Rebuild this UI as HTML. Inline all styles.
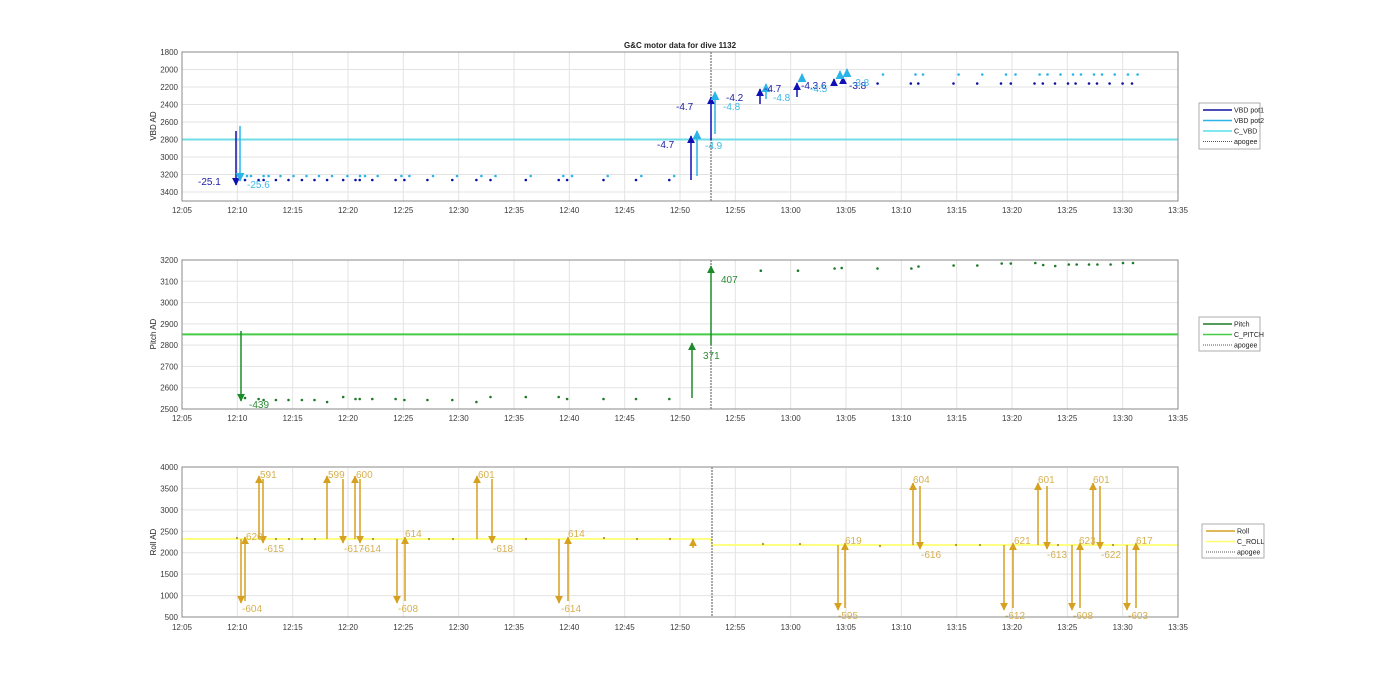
<!DOCTYPE html>
<html><head><meta charset="utf-8"><style>
html,body{margin:0;padding:0;background:#fff;}
svg{display:block;font-family:"Liberation Sans",sans-serif;}
.tk{font-size:8px;fill:#3a3a3a;}
.g{stroke:#e3e3e3;stroke-width:1;}
.ax{fill:none;stroke:#8a8a8a;stroke-width:1;}
.lg{font-size:7px;fill:#222;}
</style></head><body>
<svg width="1400" height="693" viewBox="0 0 1400 693" xmlns="http://www.w3.org/2000/svg">
<defs>
<marker id="mD" viewBox="0 0 10 10" refX="9" refY="5" markerWidth="8" markerHeight="8" markerUnits="userSpaceOnUse" orient="auto"><path d="M0,0L10,5L0,10z" fill="#1010b4"/></marker>
<marker id="mL" viewBox="0 0 10 10" refX="9" refY="5" markerWidth="9" markerHeight="9" markerUnits="userSpaceOnUse" orient="auto"><path d="M0,0L10,5L0,10z" fill="#2ab4e8"/></marker>
<marker id="mG" viewBox="0 0 10 10" refX="9" refY="5" markerWidth="8" markerHeight="8" markerUnits="userSpaceOnUse" orient="auto"><path d="M0,0L10,5L0,10z" fill="#1e8a2a"/></marker>
<marker id="mY" viewBox="0 0 10 10" refX="9" refY="5" markerWidth="8" markerHeight="8" markerUnits="userSpaceOnUse" orient="auto"><path d="M0,0L10,5L0,10z" fill="#d6a020"/></marker>
<g id="vg">
<line class="g" x1="237.3" y1="0" x2="237.3" y2="149"/><line class="g" x1="292.7" y1="0" x2="292.7" y2="149"/><line class="g" x1="348" y1="0" x2="348" y2="149"/><line class="g" x1="403.3" y1="0" x2="403.3" y2="149"/><line class="g" x1="458.7" y1="0" x2="458.7" y2="149"/><line class="g" x1="514" y1="0" x2="514" y2="149"/><line class="g" x1="569.3" y1="0" x2="569.3" y2="149"/><line class="g" x1="624.7" y1="0" x2="624.7" y2="149"/><line class="g" x1="680" y1="0" x2="680" y2="149"/><line class="g" x1="735.3" y1="0" x2="735.3" y2="149"/><line class="g" x1="790.7" y1="0" x2="790.7" y2="149"/><line class="g" x1="846" y1="0" x2="846" y2="149"/><line class="g" x1="901.3" y1="0" x2="901.3" y2="149"/><line class="g" x1="956.7" y1="0" x2="956.7" y2="149"/><line class="g" x1="1012" y1="0" x2="1012" y2="149"/><line class="g" x1="1067.3" y1="0" x2="1067.3" y2="149"/><line class="g" x1="1122.7" y1="0" x2="1122.7" y2="149"/>
</g>
<g id="xt" class="tk" text-anchor="middle">
<text x="182" y="0">12:05</text><text x="237.3" y="0">12:10</text><text x="292.7" y="0">12:15</text><text x="348" y="0">12:20</text><text x="403.3" y="0">12:25</text><text x="458.7" y="0">12:30</text><text x="514" y="0">12:35</text><text x="569.3" y="0">12:40</text><text x="624.7" y="0">12:45</text><text x="680" y="0">12:50</text><text x="735.3" y="0">12:55</text><text x="790.7" y="0">13:00</text><text x="846" y="0">13:05</text><text x="901.3" y="0">13:10</text><text x="956.7" y="0">13:15</text><text x="1012" y="0">13:20</text><text x="1067.3" y="0">13:25</text><text x="1122.7" y="0">13:30</text><text x="1178" y="0">13:35</text>
</g>
</defs>

<text x="680" y="48" text-anchor="middle" font-size="8" font-weight="bold" fill="#222">G&amp;C motor data for dive 1132</text>

<!-- ===== TOP ===== -->
<use href="#vg" transform="translate(0,52)"/>
<g class="g"><line x1="182" y1="69.5" x2="1178" y2="69.5"/><line x1="182" y1="87" x2="1178" y2="87"/><line x1="182" y1="104.5" x2="1178" y2="104.5"/><line x1="182" y1="122" x2="1178" y2="122"/><line x1="182" y1="157" x2="1178" y2="157"/><line x1="182" y1="174.5" x2="1178" y2="174.5"/><line x1="182" y1="192" x2="1178" y2="192"/></g>
<line x1="182" y1="139.5" x2="1178" y2="139.5" stroke="#70dde6" stroke-width="2"/>
<line x1="711" y1="52" x2="711" y2="201" stroke="#555" stroke-width="1" stroke-dasharray="2,1"/>
<rect class="ax" x="182" y="52" width="996" height="149"/>
<g class="tk" text-anchor="end"><text x="178" y="55">1800</text><text x="178" y="72.5">2000</text><text x="178" y="90">2200</text><text x="178" y="107.5">2400</text><text x="178" y="125">2600</text><text x="178" y="142.5">2800</text><text x="178" y="160">3000</text><text x="178" y="177.5">3200</text><text x="178" y="195">3400</text></g>
<use href="#xt" transform="translate(0,213)"/>
<text transform="translate(156,126) rotate(-90)" text-anchor="middle" font-size="8" fill="#222">VBD AD</text>
<g fill="#1010a0"><circle cx="245" cy="180" r="1.3"/><circle cx="258.6" cy="180" r="1.3"/><circle cx="263.6" cy="180" r="1.3"/><circle cx="275.9" cy="180" r="1.3"/><circle cx="288.5" cy="180" r="1.3"/><circle cx="301.9" cy="180" r="1.3"/><circle cx="314.5" cy="180" r="1.3"/><circle cx="327.1" cy="180" r="1.3"/><circle cx="343.2" cy="180" r="1.3"/><circle cx="355.5" cy="180" r="1.3"/><circle cx="359.7" cy="180" r="1.3"/><circle cx="372.3" cy="180" r="1.3"/><circle cx="395.6" cy="180" r="1.3"/><circle cx="404.4" cy="180" r="1.3"/><circle cx="427.4" cy="180" r="1.3"/><circle cx="452.3" cy="180" r="1.3"/><circle cx="476.4" cy="180" r="1.3"/><circle cx="490.5" cy="180" r="1.3"/><circle cx="525.8" cy="180" r="1.3"/><circle cx="558.7" cy="180" r="1.3"/><circle cx="567.1" cy="180" r="1.3"/><circle cx="603.5" cy="180" r="1.3"/><circle cx="636" cy="180" r="1.3"/><circle cx="669.3" cy="180" r="1.3"/>
<circle cx="877.6" cy="83.5" r="1.3"/><circle cx="910.8" cy="83.5" r="1.3"/><circle cx="918.3" cy="83.5" r="1.3"/><circle cx="953.5" cy="83.5" r="1.3"/><circle cx="977.2" cy="83.5" r="1.3"/><circle cx="1001" cy="83.5" r="1.3"/><circle cx="1010.8" cy="83.5" r="1.3"/><circle cx="1034.5" cy="83.5" r="1.3"/><circle cx="1042.8" cy="83.5" r="1.3"/><circle cx="1055" cy="83.5" r="1.3"/><circle cx="1068" cy="83.5" r="1.3"/><circle cx="1075.6" cy="83.5" r="1.3"/><circle cx="1089" cy="83.5" r="1.3"/><circle cx="1097" cy="83.5" r="1.3"/><circle cx="1109.6" cy="83.5" r="1.3"/><circle cx="1122.6" cy="83.5" r="1.3"/><circle cx="1132" cy="83.5" r="1.3"/></g>
<g fill="#2ab4e8"><circle cx="247" cy="176" r="1.3"/><circle cx="251" cy="176" r="1.3"/><circle cx="263.6" cy="176" r="1.3"/><circle cx="268.6" cy="176" r="1.3"/><circle cx="280.5" cy="176" r="1.3"/><circle cx="293.5" cy="176" r="1.3"/><circle cx="306.5" cy="176" r="1.3"/><circle cx="319" cy="176" r="1.3"/><circle cx="332" cy="176" r="1.3"/><circle cx="347.4" cy="176" r="1.3"/><circle cx="360" cy="176" r="1.3"/><circle cx="365" cy="176" r="1.3"/><circle cx="377.7" cy="176" r="1.3"/><circle cx="401.4" cy="176" r="1.3"/><circle cx="409.4" cy="176" r="1.3"/><circle cx="433" cy="176" r="1.3"/><circle cx="457" cy="176" r="1.3"/><circle cx="481.4" cy="176" r="1.3"/><circle cx="495.5" cy="176" r="1.3"/><circle cx="530.7" cy="176" r="1.3"/><circle cx="563.3" cy="176" r="1.3"/><circle cx="572" cy="176" r="1.3"/><circle cx="607.7" cy="176" r="1.3"/><circle cx="641.3" cy="176" r="1.3"/><circle cx="674.2" cy="176" r="1.3"/>
<circle cx="883" cy="74.5" r="1.3"/><circle cx="915.5" cy="74.5" r="1.3"/><circle cx="923" cy="74.5" r="1.3"/><circle cx="958.6" cy="74.5" r="1.3"/><circle cx="982.3" cy="74.5" r="1.3"/><circle cx="1006" cy="74.5" r="1.3"/><circle cx="1015.5" cy="74.5" r="1.3"/><circle cx="1039.6" cy="74.5" r="1.3"/><circle cx="1047.5" cy="74.5" r="1.3"/><circle cx="1060.5" cy="74.5" r="1.3"/><circle cx="1073" cy="74.5" r="1.3"/><circle cx="1081" cy="74.5" r="1.3"/><circle cx="1094" cy="74.5" r="1.3"/><circle cx="1102" cy="74.5" r="1.3"/><circle cx="1114.7" cy="74.5" r="1.3"/><circle cx="1128" cy="74.5" r="1.3"/><circle cx="1137.6" cy="74.5" r="1.3"/></g>
<g stroke="#1010b4" stroke-width="1.5" marker-end="url(#mD)">
<line x1="236" y1="131" x2="236" y2="185"/><line x1="691" y1="180" x2="691" y2="136"/><line x1="711" y1="140" x2="711" y2="97"/><line x1="760" y1="104" x2="760" y2="89"/><line x1="797" y1="97" x2="797" y2="83"/><line x1="834" y1="86" x2="834" y2="79"/><line x1="843" y1="84" x2="843" y2="77"/></g>
<g stroke="#2ab4e8" stroke-width="1.5" marker-end="url(#mL)">
<line x1="240" y1="126" x2="240" y2="181"/><line x1="697" y1="176" x2="697" y2="131"/><line x1="715" y1="134" x2="715" y2="92"/><line x1="766" y1="99" x2="766" y2="84"/><line x1="802" y1="82" x2="802" y2="74"/><line x1="840" y1="79" x2="840" y2="71"/><line x1="847" y1="77" x2="847" y2="69"/></g>
<g font-size="10" fill="#1e1ea8"><text x="198" y="185">-25.1</text><text x="657" y="148">-4.7</text><text x="676" y="110">-4.7</text><text x="726" y="101">-4.2</text><text x="764" y="92">-4.7</text><text x="801" y="89">-4.3.6</text><text x="849" y="89">-3.8</text></g>
<g font-size="10" fill="#3cb8e8"><text x="247" y="188">-25.6</text><text x="705" y="149">-4.9</text><text x="723" y="110">-4.8</text><text x="773" y="101">-4.8</text><text x="810" y="92">-4.5</text><text x="852" y="86">-3.8</text></g>
<rect x="1199" y="103" width="61" height="46" fill="#fff" stroke="#999" stroke-width="0.8"/>
<line x1="1203" y1="110" x2="1232" y2="110" stroke="#1010a0" stroke-width="1.5"/><text class="lg" x="1234" y="112.5">VBD pot1</text>
<line x1="1203" y1="120.5" x2="1232" y2="120.5" stroke="#2ab4e8" stroke-width="1.5"/><text class="lg" x="1234" y="123">VBD pot2</text>
<line x1="1203" y1="131" x2="1232" y2="131" stroke="#55e0ea" stroke-width="1.5"/><text class="lg" x="1234" y="133.5">C_VBD</text>
<line x1="1203" y1="141.5" x2="1232" y2="141.5" stroke="#555" stroke-dasharray="1,1"/><text class="lg" x="1234" y="144">apogee</text>

<!-- ===== MIDDLE ===== -->
<use href="#vg" transform="translate(0,260)"/>
<g class="g"><line x1="182" y1="281.3" x2="1178" y2="281.3"/><line x1="182" y1="302.6" x2="1178" y2="302.6"/><line x1="182" y1="323.9" x2="1178" y2="323.9"/><line x1="182" y1="345.1" x2="1178" y2="345.1"/><line x1="182" y1="366.4" x2="1178" y2="366.4"/><line x1="182" y1="387.7" x2="1178" y2="387.7"/></g>
<line x1="182" y1="334.4" x2="1178" y2="334.4" stroke="#44cc44" stroke-width="2"/>
<line x1="711" y1="260" x2="711" y2="409" stroke="#555" stroke-width="1" stroke-dasharray="2,1"/>
<rect class="ax" x="182" y="260" width="996" height="149"/>
<g class="tk" text-anchor="end"><text x="178" y="263">3200</text><text x="178" y="284.3">3100</text><text x="178" y="305.6">3000</text><text x="178" y="326.9">2900</text><text x="178" y="348.1">2800</text><text x="178" y="369.4">2700</text><text x="178" y="390.7">2600</text><text x="178" y="412">2500</text></g>
<use href="#xt" transform="translate(0,421)"/>
<text transform="translate(156,334) rotate(-90)" text-anchor="middle" font-size="8" fill="#222">Pitch AD</text>
<g fill="#1e7a28"><circle cx="245" cy="398" r="1.3"/><circle cx="258.6" cy="399" r="1.3"/><circle cx="263.6" cy="400" r="1.3"/><circle cx="275.9" cy="400" r="1.3"/><circle cx="288.5" cy="400" r="1.3"/><circle cx="301.9" cy="400" r="1.3"/><circle cx="314.5" cy="400" r="1.3"/><circle cx="327.1" cy="402" r="1.3"/><circle cx="343.2" cy="397" r="1.3"/><circle cx="355.5" cy="399" r="1.3"/><circle cx="359.7" cy="399" r="1.3"/><circle cx="372.3" cy="399" r="1.3"/><circle cx="395.6" cy="399" r="1.3"/><circle cx="404.4" cy="400" r="1.3"/><circle cx="427.4" cy="400" r="1.3"/><circle cx="452.3" cy="400" r="1.3"/><circle cx="476.4" cy="402" r="1.3"/><circle cx="490.5" cy="397" r="1.3"/><circle cx="525.8" cy="397" r="1.3"/><circle cx="558.7" cy="397" r="1.3"/><circle cx="567.1" cy="399" r="1.3"/><circle cx="603.5" cy="399" r="1.3"/><circle cx="636" cy="399" r="1.3"/><circle cx="669.3" cy="399" r="1.3"/>
<circle cx="760.8" cy="270.7" r="1.3"/><circle cx="798" cy="270.7" r="1.3"/><circle cx="834.6" cy="268.5" r="1.3"/><circle cx="841.7" cy="268" r="1.3"/><circle cx="877.5" cy="268.5" r="1.3"/><circle cx="911.4" cy="268.5" r="1.3"/><circle cx="918.5" cy="266.5" r="1.3"/><circle cx="953.6" cy="265.5" r="1.3"/><circle cx="977.3" cy="265.5" r="1.3"/><circle cx="1001.7" cy="263.5" r="1.3"/><circle cx="1010.8" cy="263.5" r="1.3"/><circle cx="1035.3" cy="263" r="1.3"/><circle cx="1043.2" cy="265" r="1.3"/><circle cx="1055.2" cy="266" r="1.3"/><circle cx="1068.8" cy="264.5" r="1.3"/><circle cx="1076.7" cy="264.5" r="1.3"/><circle cx="1089" cy="264.5" r="1.3"/><circle cx="1097.4" cy="264.5" r="1.3"/><circle cx="1110.6" cy="264.5" r="1.3"/><circle cx="1123" cy="263" r="1.3"/><circle cx="1133" cy="263" r="1.3"/></g>
<g stroke="#1e8a2a" stroke-width="1.5" marker-end="url(#mG)">
<line x1="241" y1="331" x2="241" y2="401"/><line x1="692" y1="398" x2="692" y2="343"/><line x1="711" y1="345" x2="711" y2="266"/></g>
<g font-size="10" fill="#2e8a36"><text x="249" y="408">-439</text><text x="703" y="359">371</text><text x="721" y="283">407</text></g>
<rect x="1199" y="317" width="61" height="34" fill="#fff" stroke="#999" stroke-width="0.8"/>
<line x1="1203" y1="324" x2="1232" y2="324" stroke="#1e7a28" stroke-width="1.5"/><text class="lg" x="1234" y="326.5">Pitch</text>
<line x1="1203" y1="334.5" x2="1232" y2="334.5" stroke="#44cc44" stroke-width="1.5"/><text class="lg" x="1234" y="337">C_PITCH</text>
<line x1="1203" y1="345" x2="1232" y2="345" stroke="#555" stroke-dasharray="1,1"/><text class="lg" x="1234" y="347.5">apogee</text>

<!-- ===== BOTTOM ===== -->
<use href="#vg" transform="translate(0,468)"/>
<g class="g"><line x1="182" y1="488.4" x2="1178" y2="488.4"/><line x1="182" y1="509.9" x2="1178" y2="509.9"/><line x1="182" y1="531.3" x2="1178" y2="531.3"/><line x1="182" y1="552.7" x2="1178" y2="552.7"/><line x1="182" y1="574.1" x2="1178" y2="574.1"/><line x1="182" y1="595.6" x2="1178" y2="595.6"/></g>
<polyline points="182,539 711,539 712,545 1178,545" fill="none" stroke="#ffff70" stroke-width="1.8"/>
<line x1="712" y1="467" x2="712" y2="617" stroke="#555" stroke-width="1" stroke-dasharray="2,1"/>
<rect class="ax" x="182" y="467" width="996" height="150"/>
<g class="tk" text-anchor="end"><text x="178" y="470">4000</text><text x="178" y="491.4">3500</text><text x="178" y="512.9">3000</text><text x="178" y="534.3">2500</text><text x="178" y="555.7">2000</text><text x="178" y="577.1">1500</text><text x="178" y="598.6">1000</text><text x="178" y="620">500</text></g>
<use href="#xt" transform="translate(0,630)"/>
<text transform="translate(156,542) rotate(-90)" text-anchor="middle" font-size="8" fill="#222">Roll AD</text>
<g fill="#b09030"><circle cx="237" cy="538" r="1.1"/><circle cx="276" cy="539" r="1.1"/><circle cx="289" cy="539" r="1.1"/><circle cx="302" cy="539" r="1.1"/><circle cx="315" cy="539" r="1.1"/><circle cx="373" cy="539" r="1.1"/><circle cx="429" cy="539" r="1.1"/><circle cx="453" cy="539" r="1.1"/><circle cx="526" cy="539" r="1.1"/><circle cx="604" cy="538" r="1.1"/><circle cx="637" cy="539" r="1.1"/><circle cx="670" cy="539" r="1.1"/><circle cx="763" cy="544" r="1.1"/><circle cx="800" cy="544" r="1.1"/><circle cx="880" cy="546" r="1.1"/><circle cx="956" cy="545" r="1.1"/><circle cx="980" cy="545" r="1.1"/><circle cx="1058" cy="545" r="1.1"/><circle cx="1113" cy="545" r="1.1"/></g>
<g stroke="#d6a020" stroke-width="1.5" marker-end="url(#mY)">
<line x1="241" y1="539" x2="241" y2="603"/><line x1="245" y1="601" x2="245" y2="537"/><line x1="259" y1="539" x2="259" y2="476"/><line x1="263" y1="479" x2="263" y2="543"/>
<line x1="327" y1="539" x2="327" y2="476"/><line x1="343" y1="479" x2="343" y2="543"/><line x1="355" y1="539" x2="355" y2="476"/><line x1="360" y1="479" x2="360" y2="543"/>
<line x1="397" y1="539" x2="397" y2="603"/><line x1="405" y1="601" x2="405" y2="537"/><line x1="477" y1="539" x2="477" y2="476"/><line x1="492" y1="479" x2="492" y2="543"/>
<line x1="559" y1="539" x2="559" y2="603"/><line x1="568" y1="601" x2="568" y2="537"/><line x1="693" y1="548" x2="693" y2="539"/>
<line x1="838" y1="545" x2="838" y2="610"/><line x1="845" y1="608" x2="845" y2="543"/><line x1="913" y1="545" x2="913" y2="483"/><line x1="920" y1="486" x2="920" y2="549"/>
<line x1="1004" y1="545" x2="1004" y2="610"/><line x1="1013" y1="608" x2="1013" y2="543"/><line x1="1038" y1="545" x2="1038" y2="483"/><line x1="1047" y1="486" x2="1047" y2="549"/>
<line x1="1072" y1="545" x2="1072" y2="610"/><line x1="1080" y1="608" x2="1080" y2="543"/><line x1="1093" y1="545" x2="1093" y2="483"/><line x1="1100" y1="486" x2="1100" y2="549"/>
<line x1="1127" y1="545" x2="1127" y2="610"/><line x1="1136" y1="608" x2="1136" y2="543"/></g>
<g font-size="10" fill="#d6b050"><text x="242" y="612">-604</text><text x="246" y="540">620</text><text x="260" y="478">591</text><text x="264" y="552">-615</text>
<text x="328" y="478">599</text><text x="344" y="552">-617</text><text x="356" y="478">600</text><text x="361" y="552">-614</text>
<text x="398" y="612">-608</text><text x="405" y="537">614</text><text x="478" y="478">601</text><text x="493" y="552">-618</text>
<text x="561" y="612">-614</text><text x="568" y="537">614</text>
<text x="838" y="619">-595</text><text x="845" y="544">619</text><text x="913" y="483">604</text><text x="921" y="558">-616</text>
<text x="1005" y="619">-612</text><text x="1014" y="544">621</text><text x="1038" y="483">601</text><text x="1047" y="558">-613</text>
<text x="1073" y="619">-608</text><text x="1079" y="544">623</text><text x="1093" y="483">601</text><text x="1101" y="558">-622</text>
<text x="1128" y="619">-603</text><text x="1136" y="544">617</text></g>
<rect x="1202" y="524" width="62" height="34" fill="#fff" stroke="#999" stroke-width="0.8"/>
<line x1="1206" y1="531" x2="1235" y2="531" stroke="#d6a020" stroke-width="1.5"/><text class="lg" x="1237" y="533.5">Roll</text>
<line x1="1206" y1="541.5" x2="1235" y2="541.5" stroke="#ffff70" stroke-width="1.5"/><text class="lg" x="1237" y="544">C_ROLL</text>
<line x1="1206" y1="552" x2="1235" y2="552" stroke="#555" stroke-dasharray="1,1"/><text class="lg" x="1237" y="554.5">apogee</text>
</svg>
</body></html>
